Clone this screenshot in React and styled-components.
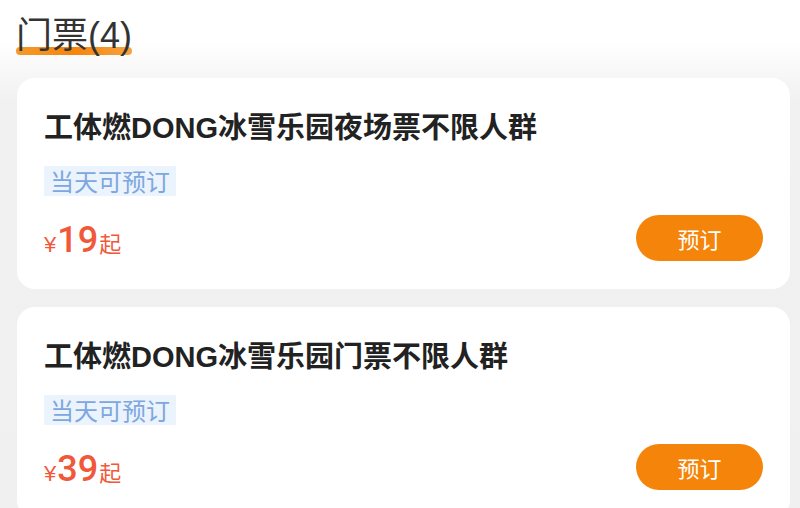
import React from "react";
import styled, { createGlobalStyle } from "styled-components";

const GlobalStyle = createGlobalStyle`
  html, body {
    margin: 0;
    padding: 0;
  }
  body {
    background: linear-gradient(180deg, #ffffff 0px, #ffffff 40px, #f1f1f1 100px, #f0f0f0 100%);
    font-family: "Liberation Sans", "Noto Sans CJK SC", sans-serif;
    min-height: 508px;
  }
`;

const Page = styled.div`
  display: flex;
  flex-direction: column;
  padding: 0 10px 0 17px;
`;

const Header = styled.div`
  display: flex;
  height: 78px;
  align-items: flex-start;
  padding-top: 16px;
  box-sizing: border-box;
  margin-left: -1px;
`;

const HeaderTitle = styled.h2`
  position: relative;
  margin: 0;
  font-size: 36px;
  font-weight: 400;
  line-height: 40px;
  color: #333;
  font-family: "Liberation Sans", "Noto Sans CJK SC", sans-serif;
  z-index: 0;

  &::after {
    content: "";
    position: absolute;
    left: 0;
    right: 0;
    top: 31px;
    height: 8px;
    border-radius: 4px;
    background: linear-gradient(90deg, #f39a2a, #f5850c 50%, #f7a240);
    z-index: -1;
  }
`;

const CardList = styled.div`
  display: flex;
  flex-direction: column;
  gap: 18px;
`;

const Card = styled.div`
  display: flex;
  flex-direction: column;
  align-items: flex-start;
  background: #fff;
  border-radius: 18px;
  padding: 30px 27px 28px 27px;
`;

const Title = styled.div`
  font-size: 29px;
  font-weight: 700;
  line-height: 40px;
  color: #222;
  font-family: "Liberation Sans", "Noto Sans CJK SC", sans-serif;
`;

const Tag = styled.span`
  margin-top: 18px;
  height: 30px;
  line-height: 30px;
  padding: 0 6px;
  background: #ebf3fd;
  color: #7ea7df;
  font-size: 24px;
  font-family: "Noto Sans CJK SC", sans-serif;
`;

const BottomRow = styled.div`
  margin-top: 19px;
  align-self: stretch;
  display: flex;
  align-items: center;
  justify-content: space-between;
  height: 46px;
`;

const Price = styled.div`
  display: flex;
  align-items: baseline;
  color: #f1583a;
  padding-top: 4px;
`;

const Currency = styled.span`
  font-size: 22px;
  margin-right: 1px;
  font-family: "Liberation Sans", sans-serif;
`;

const Amount = styled.span`
  font-size: 36px;
  font-weight: 500;
  font-family: Roboto, "Liberation Sans", sans-serif;
`;

const Suffix = styled.span`
  font-size: 22px;
  margin-left: 1px;
  font-family: "Noto Sans CJK SC", sans-serif;
`;

const BookButton = styled.button`
  width: 127px;
  height: 46px;
  border: none;
  border-radius: 23px;
  background: #f5840a;
  color: #fff;
  font-size: 22px;
  font-family: "Noto Sans CJK SC", sans-serif;
  cursor: pointer;
  padding: 0;
`;

const tickets = [
  { name: "工体燃DONG冰雪乐园夜场票不限人群", price: 19 },
  { name: "工体燃DONG冰雪乐园门票不限人群", price: 39 },
];

const App = () => {
  return (
    <>
      <GlobalStyle />
      <Page>
        <Header>
          <HeaderTitle>门票(4)</HeaderTitle>
        </Header>
        <CardList>
          {tickets.map((t, index) => (
            <Card key={index}>
              <Title>{t.name}</Title>
              <Tag>当天可预订</Tag>
              <BottomRow>
                <Price>
                  <Currency>¥</Currency>
                  <Amount>{t.price}</Amount>
                  <Suffix>起</Suffix>
                </Price>
                <BookButton>预订</BookButton>
              </BottomRow>
            </Card>
          ))}
        </CardList>
      </Page>
    </>
  );
};

export default App;
